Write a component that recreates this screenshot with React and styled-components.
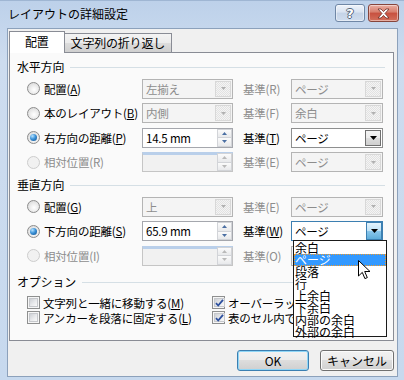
import React from 'react'
import styled, { createGlobalStyle } from 'styled-components'

const Global = createGlobalStyle`
  html, body { margin: 0; padding: 0; }
  body {
    width: 404px;
    height: 380px;
    overflow: hidden;
    background: #fff;
    font-family: "Noto Sans CJK JP", sans-serif;
  }
  * { box-sizing: border-box; }
`;

const Window = styled.div`
  width: 404px;
  height: 380px;
  display: flex;
  flex-direction: column;
  background: linear-gradient(#bdd1ea, #cddcef 60px, #c7d9ee);
  border-top: 1px solid #9fb6d3;
  font-size: 11.5px;
  letter-spacing: -0.2px;
  color: #000;
`;

const TitleBar = styled.div`
  height: 27px;
  display: flex;
  align-items: flex-start;
  padding: 0 5px 0 8px;
`;

const Title = styled.div`
  line-height: 26px;
  font-size: 12px;
  letter-spacing: 0;
`;

const Caps = styled.div`
  margin-left: auto;
  margin-top: 3px;
  display: flex;
  gap: 3px;
`;

const CapButton = styled.div`
  width: ${({ $w }) => $w}px;
  height: 18px;
  border-radius: 3px;
  display: flex;
  align-items: center;
  justify-content: center;
  border: 1px solid ${({ $close }) => ($close ? '#86453c' : '#6f87a6')};
  background: ${({ $close }) =>
    $close
      ? 'linear-gradient(#e9aea2, #d77d6c 45%, #c7503f 50%, #d3705c)'
      : 'linear-gradient(#eef3fa, #d9e3f1 45%, #c4d3e7 50%, #d0ddee)'};
  box-shadow: inset 0 0 0 1px rgba(255, 255, 255, 0.45);
`;

const HelpMark = styled.span`
  font-family: "DejaVu Sans", sans-serif;
  font-weight: bold;
  font-size: 13px;
  line-height: 1;
  color: #fff;
  text-shadow: 1px 0 #55657a, -1px 0 #55657a, 0 1px #55657a, 0 -1px #55657a;
`;

const Client = styled.div`
  margin: 0 6px 3px 7px;
  flex: 1;
  border: 1px solid #8ca1bb;
  background: #f0f0f0;
  padding: 2px 3px 0 1px;
  display: flex;
  flex-direction: column;
`;

const TabStrip = styled.div`
  height: 21px;
  display: flex;
  align-items: flex-end;
`;

const Tab = styled.div`
  position: relative;
  z-index: ${({ $active }) => ($active ? 2 : 1)};
  height: ${({ $active }) => ($active ? 22 : 19)}px;
  margin-bottom: ${({ $active }) => ($active ? -1 : 0)}px;
  margin-left: ${({ $active }) => ($active ? 0 : -1)}px;
  padding: ${({ $active }) => ($active ? '0 15px' : '0 6px')};
  border: 1px solid #898c95;
  border-bottom: none;
  background: ${({ $active }) => ($active ? '#fff' : 'linear-gradient(#f3f3f3, #ebebeb 50%, #dddddd 50%, #cfcfcf)')};
  line-height: ${({ $active }) => ($active ? 20 : 17)}px;
  font-size: 12px;
  text-align: center;
  white-space: nowrap;
`;

const Pane = styled.div`
  height: 289px;
  border: 1px solid #898c95;
  background: #fafafa;
  padding: 7px 8px 0 7px;
  display: flex;
  flex-direction: column;
`;

const Section = styled.div`
  display: flex;
  flex-direction: column;
  gap: 4.5px;
  margin-top: ${({ $top }) => $top || 0}px;
`;

const GroupHead = styled.div`
  display: flex;
  align-items: center;
  gap: 6px;
  height: 14px;
  line-height: 14px;
  font-size: 12px;
  &::after {
    content: '';
    flex: 1;
    height: 1px;
    background: #d5dfe5;
  }
`;

const FieldRow = styled.div`
  display: grid;
  grid-template-columns: 17px 98px 91px 58px 92px;
  align-items: center;
  height: 20px;
  margin-left: 10px;
`;

const Radio = styled.span`
  width: 13px;
  height: 13px;
  border-radius: 50%;
  border: 1px solid ${({ $disabled }) => ($disabled ? '#cdcdcd' : '#8c8c8c')};
  background: ${({ $disabled }) =>
    $disabled
      ? '#f1f1f1'
      : 'radial-gradient(circle at 55% 60%, #ffffff 0, #f0f0f0 35%, #d2d2d2 100%)'};
  display: flex;
  align-items: center;
  justify-content: center;
  &::after {
    content: '';
    display: ${({ $checked }) => ($checked ? 'block' : 'none')};
    width: 7px;
    height: 7px;
    border-radius: 50%;
    background: radial-gradient(circle at 35% 30%, #b6e3ff 0, #3c92d8 45%, #0b4c8a 100%);
  }
`;

const Label = styled.span`
  white-space: nowrap;
  color: ${({ $disabled }) => ($disabled ? '#8d8d8d' : '#000')};
  padding-left: ${({ $pad }) => $pad || 0}px;
  line-height: 14px;
`;

const comboBorder = {
  disabled: '#b4b4b4',
  normal: '#8e8f8f',
  focus: '#3c7fb1',
};

const Combo = styled.div`
  position: relative;
  height: 20px;
  display: flex;
  border: 1px solid ${({ $mode }) => comboBorder[$mode]};
  background: ${({ $mode }) => ($mode === 'disabled' ? '#f4f4f4' : '#fff')};
  color: ${({ $mode }) => ($mode === 'disabled' ? '#8d8d8d' : '#000')};
`;

const ComboText = styled.span`
  flex: 1;
  padding-left: 3px;
  line-height: 18px;
  white-space: nowrap;
  overflow: hidden;
`;

const dropBg = {
  disabled: 'repeating-conic-gradient(#f4f4f4 0 25%, #e2e2e2 0 50%) 0 0 / 2px 2px',
  normal: 'linear-gradient(#f3f3f3, #ebebeb 50%, #dddddd 50%, #cfcfcf)',
  focus: 'linear-gradient(#e3f3fc, #bfe2f6 50%, #8cc8ec 50%, #5fadda)',
};

const DropBtn = styled.span`
  width: 16px;
  margin: ${({ $mode }) => ($mode === 'focus' ? '0' : '1px')};
  display: flex;
  align-items: center;
  justify-content: center;
  border: 1px solid ${({ $mode }) => ($mode === 'disabled' ? '#d8d8d8' : $mode === 'focus' ? '#3c7fb1' : '#707070')};
  background: ${({ $mode }) => dropBg[$mode]};
`;

const Spin = styled.div`
  height: 20px;
  display: flex;
  border: 1px solid ${({ $disabled }) => ($disabled ? '#c5c5c5' : '#a5a7ad')};
  border-top: ${({ $disabled }) => ($disabled ? '3px solid #b9cfea' : '1px solid #a5a7ad')};
  background: ${({ $disabled }) => ($disabled ? '#f1f1f1' : '#fff')};
`;

const SpinText = styled.span`
  flex: 1;
  padding-left: 3px;
  line-height: 18px;
  white-space: nowrap;
`;

const SpinBtns = styled.span`
  width: 15px;
  display: flex;
  flex-direction: column;
  margin-top: ${({ $disabled }) => ($disabled ? -2 : 0)}px;
`;

const SpinHalf = styled.span`
  flex: 1;
  display: flex;
  align-items: center;
  justify-content: center;
  border: 1px solid #d2d4d8;
  background: linear-gradient(#fbfbfb, #e8e9eb);
  & + & { border-top: none; }
`;

const CheckGrid = styled.div`
  display: grid;
  grid-template-columns: 185px auto;
  margin: 6px 0 0 10px;
`;

const CheckItem = styled.div`
  height: 15px;
  display: flex;
  align-items: center;
  gap: 3px;
  white-space: nowrap;
`;

const CheckBox = styled.span`
  width: 13px;
  height: 13px;
  flex: none;
  border: 1px solid #8e8f8f;
  padding: 1px;
  background: #f6f6f6;
  display: flex;
`;

const CheckFill = styled.span`
  flex: 1;
  border: 1px solid #c6c8cc;
  background: linear-gradient(135deg, #cdd0d5 0%, #e9eaec 55%, #f9f9f9 100%);
  display: flex;
  align-items: center;
  justify-content: center;
`;

const DropList = styled.div`
  position: absolute;
  z-index: 20;
  top: 100%;
  left: 1px;
  width: 94px;
  height: 97px;
  border: 1px solid #1a1a1a;
  background: #fff;
  color: #000;
  padding-top: 1px;
  letter-spacing: 0;
`;

const ListItem = styled.div`
  height: 12px;
  line-height: 12px;
  font-size: 12px;
  padding-left: 1px;
  white-space: nowrap;
  background: ${({ $selected }) => ($selected ? '#3399ff' : 'transparent')};
  color: ${({ $selected }) => ($selected ? '#fff' : '#000')};
  outline: ${({ $selected }) => ($selected ? '1px dotted #f09a2a' : 'none')};
  outline-offset: -1px;
`;

const Cursor = styled.svg`
  position: absolute;
  left: 64px;
  top: 19px;
`;

const Footer = styled.div`
  display: flex;
  justify-content: flex-end;
  gap: 11px;
  padding-top: 9px;
`;

const DlgButton = styled.button`
  width: ${({ $w }) => $w}px;
  height: 21px;
  padding: 0;
  border-radius: 3px;
  border: 1px solid ${({ $default }) => ($default ? '#3c7fb1' : '#707070')};
  background: linear-gradient(#f2f2f2, #ebebeb 50%, #dddddd 50%, #cfcfcf);
  box-shadow: inset 0 0 0 1px ${({ $default }) => ($default ? '#8fd6f7' : '#fbfbfb')};
  font-family: inherit;
  font-size: 12px;
  color: #000;
`;

const Arrow = ({ color = '#000', w = 7 }) => (
  <svg width={w} height={Math.ceil(w / 2)} viewBox="0 0 7 4">
    <path d="M0 0h7L3.5 4z" fill={color} />
  </svg>
);

const SmallArrow = ({ up, color }) => (
  <svg width="5" height="3" viewBox="0 0 5 3">
    <path d={up ? 'M0 3h5L2.5 0z' : 'M0 0h5L2.5 3z'} fill={color} />
  </svg>
);

const Tick = () => (
  <svg width="9" height="8" viewBox="0 0 9 8">
    <path d="M1 4.2l2.2 2.3L8 0.8" fill="none" stroke="#2c4f9e" strokeWidth="1.8" />
  </svg>
);

const M = ({ k }) => (
  <span>
    (<u>{k}</u>)
  </span>
);

const ComboBox = ({ mode = 'disabled', value, children }) => (
  <Combo $mode={mode}>
    <ComboText>{value}</ComboText>
    <DropBtn $mode={mode}>
      {mode === 'disabled' ? <Arrow color="#b0b0b0" w={5} /> : <Arrow />}
    </DropBtn>
    {children}
  </Combo>
);

const SpinBox = ({ value, disabled }) => (
  <Spin $disabled={disabled}>
    <SpinText>{value}</SpinText>
    <SpinBtns $disabled={disabled}>
      <SpinHalf>
        <SmallArrow up color={disabled ? '#b9b9b9' : '#4b6fa3'} />
      </SpinHalf>
      <SpinHalf>
        <SmallArrow color={disabled ? '#b9b9b9' : '#4b6fa3'} />
      </SpinHalf>
    </SpinBtns>
  </Spin>
);

const Check = ({ checked, children }) => (
  <CheckItem>
    <CheckBox>
      <CheckFill>{checked && <Tick />}</CheckFill>
    </CheckBox>
    <span>{children}</span>
  </CheckItem>
);

const listItems = ['余白', 'ページ', '段落', '行', '上余白', '下余白', '内部の余白', '外部の余白'];

const App = () => {
  return (
    <Window>
      <Global />
      <TitleBar>
        <Title>レイアウトの詳細設定</Title>
        <Caps>
          <CapButton $w={30}>
            <HelpMark>?</HelpMark>
          </CapButton>
          <CapButton $w={31} $close>
            <svg width="13" height="11" viewBox="0 0 13 11">
              <path
                d="M1 1h3l2.5 2.6L9 1h3L8 5.5 12 10H9L6.5 7.4 4 10H1l4-4.5z"
                fill="#fff"
                stroke="#6a2c24"
                strokeWidth="0.8"
              />
            </svg>
          </CapButton>
        </Caps>
      </TitleBar>

      <Client>
        <TabStrip>
          <Tab $active>配置</Tab>
          <Tab>文字列の折り返し</Tab>
        </TabStrip>

        <Pane>
          <Section>
            <GroupHead>水平方向</GroupHead>
            <FieldRow>
              <Radio />
              <Label>配置<M k="A" /></Label>
              <ComboBox value="左揃え" />
              <Label $pad={10} $disabled>基準(R)</Label>
              <ComboBox value="ページ" />
            </FieldRow>
            <FieldRow>
              <Radio />
              <Label>本のレイアウト<M k="B" /></Label>
              <ComboBox value="内側" />
              <Label $pad={10} $disabled>基準(F)</Label>
              <ComboBox value="余白" />
            </FieldRow>
            <FieldRow>
              <Radio $checked />
              <Label>右方向の距離<M k="P" /></Label>
              <SpinBox value="14.5 mm" />
              <Label $pad={10}>基準<M k="T" /></Label>
              <ComboBox mode="normal" value="ページ" />
            </FieldRow>
            <FieldRow>
              <Radio $disabled />
              <Label $disabled>相対位置(R)</Label>
              <SpinBox disabled value="" />
              <Label $pad={10} $disabled>基準(E)</Label>
              <ComboBox value="ページ" />
            </FieldRow>
          </Section>

          <Section $top={6}>
            <GroupHead>垂直方向</GroupHead>
            <FieldRow>
              <Radio />
              <Label>配置<M k="G" /></Label>
              <ComboBox value="上" />
              <Label $pad={10} $disabled>基準(E)</Label>
              <ComboBox value="ページ" />
            </FieldRow>
            <FieldRow>
              <Radio $checked />
              <Label>下方向の距離<M k="S" /></Label>
              <SpinBox value="65.9 mm" />
              <Label $pad={10}>基準<M k="W" /></Label>
              <ComboBox mode="focus" value="ページ">
                <DropList>
                  {listItems.map((item, i) => (
                    <ListItem key={item} $selected={i === 1}>
                      {item}
                    </ListItem>
                  ))}
                  <Cursor width="13" height="20" viewBox="0 0 13 20">
                    <path
                      d="M0.5 0.5v15.5l3.8-3.6 2.6 6.2 2.4-1-2.6-6.1h5.3z"
                      fill="#fff"
                      stroke="#000"
                      strokeWidth="1"
                      strokeLinejoin="round"
                    />
                  </Cursor>
                </DropList>
              </ComboBox>
            </FieldRow>
            <FieldRow>
              <Radio $disabled />
              <Label $disabled>相対位置(I)</Label>
              <SpinBox disabled value="" />
              <Label $pad={10} $disabled>基準(O)</Label>
              <ComboBox value="" />
            </FieldRow>
          </Section>

          <Section $top={9.5}>
            <GroupHead>オプション</GroupHead>
          </Section>
          <CheckGrid>
            <Check>文字列と一緒に移動する<M k="M" /></Check>
            <Check checked>オーバーラップさせる<M k="V" /></Check>
            <Check>アンカーを段落に固定する<M k="L" /></Check>
            <Check checked>表のセル内で配置する<M k="C" /></Check>
          </CheckGrid>
        </Pane>

        <Footer>
          <DlgButton $w={72} $default>OK</DlgButton>
          <DlgButton $w={74}>キャンセル</DlgButton>
        </Footer>
      </Client>
    </Window>
  );
};

export default App
